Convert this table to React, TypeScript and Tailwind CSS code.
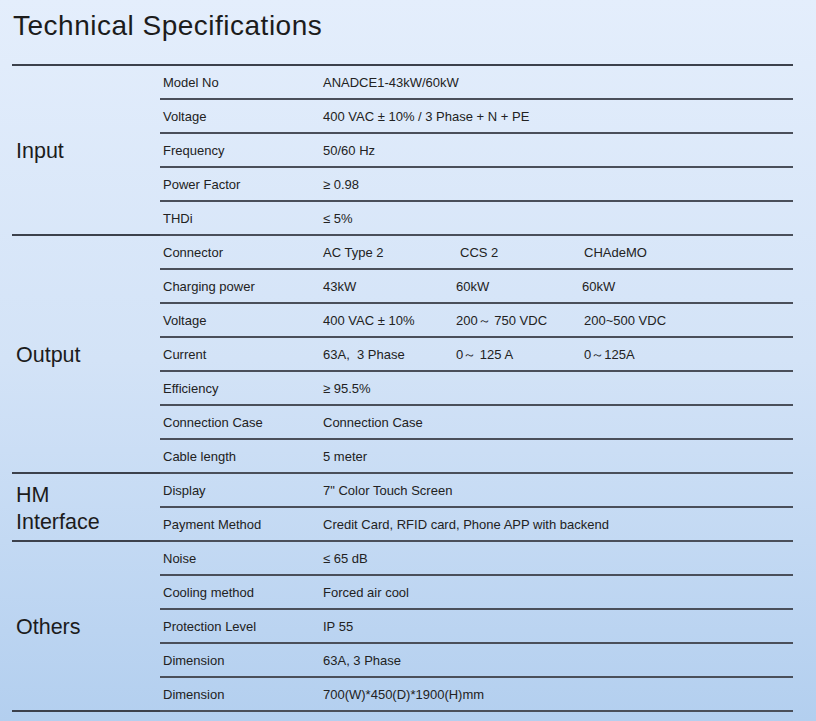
import React from "react";

type Row = { label: string; values: string[] };
type Group = { title: string[]; rows: Row[] };

// spec table data
const groups: Group[] = [
  {
    title: ["Input"],
    rows: [
      { label: "Model No", values: ["ANADCE1-43kW/60kW"] },
      { label: "Voltage", values: ["400 VAC ± 10% / 3 Phase + N + PE"] },
      { label: "Frequency", values: ["50/60 Hz"] },
      { label: "Power Factor", values: ["≥ 0.98"] },
      { label: "THDi", values: ["≤ 5%"] },
    ],
  },
  {
    title: ["Output"],
    rows: [
      { label: "Connector", values: ["AC Type 2", "CCS 2", "CHAdeMO"] },
      { label: "Charging power", values: ["43kW", "60kW", "60kW"] },
      { label: "Voltage", values: ["400 VAC ± 10%", "200～ 750 VDC", "200~500 VDC"] },
      { label: "Current", values: ["63A,  3 Phase", "0～ 125 A", "0～125A"] },
      { label: "Efficiency", values: ["≥ 95.5%"] },
      { label: "Connection Case", values: ["Connection Case"] },
      { label: "Cable length", values: ["5 meter"] },
    ],
  },
  {
    title: ["HM", "Interface"],
    rows: [
      { label: "Display", values: ["7\" Color Touch Screen"] },
      { label: "Payment Method", values: ["Credit Card, RFID card, Phone APP with backend"] },
    ],
  },
  {
    title: ["Others"],
    rows: [
      { label: "Noise", values: ["≤ 65 dB"] },
      { label: "Cooling method", values: ["Forced air cool"] },
      { label: "Protection Level", values: ["IP 55"] },
      { label: "Dimension", values: ["63A, 3 Phase"] },
      { label: "Dimension", values: ["700(W)*450(D)*1900(H)mm"] },
    ],
  },
];

function SpecRow({ row }: { row: Row }) {
  const multi = row.values.length > 1;
  return (
    <div className="flex h-[34px] items-center whitespace-pre border-b-2 border-[#4a4f5a] pt-px text-[13px] text-[#222]">
      <div className="w-[163px] pl-[3px]">{row.label}</div>
      {multi ? (
        <>
          <div className="w-[133px]">{row.values[0]}</div>
          <div className={row.label === "Connector" ? "w-[126px] pl-[4px]" : "w-[126px]"}>
            {row.values[1]}
          </div>
          <div className={row.label === "Charging power" ? "" : "pl-[2px]"}>{row.values[2]}</div>
        </>
      ) : (
        <div>{row.values[0]}</div>
      )}
    </div>
  );
}

export default function App() {
  return (
    <div
      className="h-[721px] w-full overflow-hidden bg-gradient-to-b from-[#e4eefc] via-[#d3e3f7] to-[#b3cfef]"
      style={{ fontFamily: '"Liberation Sans", Arial, sans-serif' }}
    >
      <h1 className="pl-[13px] pt-[12px] text-[28px] leading-[28px] tracking-[0.5px] text-[#1c1c1c]">
        Technical Specifications
      </h1>

      <div className="ml-[12px] mt-[24px] w-[781px] border-t-2 border-[#3c414c]">
        {groups.map((g) => (
          <div key={g.title.join(" ")} className="flex">
            <div
              className={
                g.title.length > 1
                  ? "flex w-[148px] flex-col justify-center border-b-2 border-[#3c414c] pl-[4px] pt-[4px] text-[21.5px] leading-[27px] text-[#1c1c1c]"
                  : "flex w-[148px] flex-col justify-center border-b-2 border-[#3c414c] pl-[4px] pt-[2px] text-[21.5px] leading-[27px] text-[#1c1c1c]"
              }
            >
              {g.title.map((t) => (
                <span key={t}>{t}</span>
              ))}
            </div>
            <div className="flex flex-1 flex-col">
              {g.rows.map((r, i) => (
                <SpecRow key={i} row={r} />
              ))}
            </div>
          </div>
        ))}
      </div>
    </div>
  );
}
